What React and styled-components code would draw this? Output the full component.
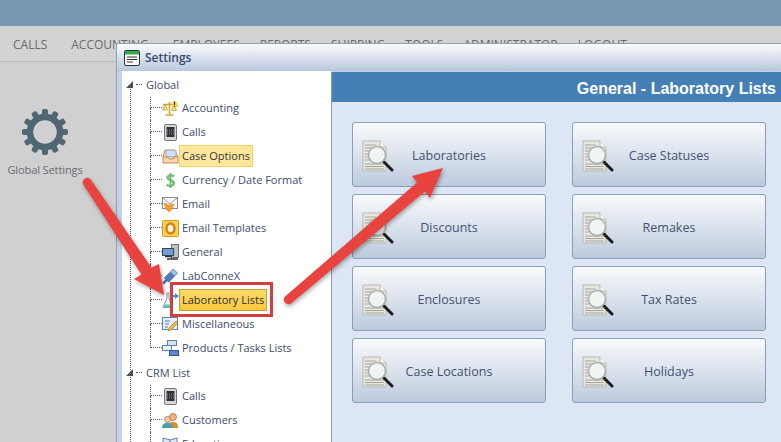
import styled, { createGlobalStyle } from 'styled-components';

const GlobalStyle = createGlobalStyle`
  html, body {
    margin: 0;
    padding: 0;
    background: #d0d0d0;
    font-family: "Open Sans", "Noto Sans", sans-serif;
  }
`;

const Page = styled.div`
  position: relative;
  width: 781px;
  height: 442px;
  overflow: hidden;
  background: #d0d0d0;
`;

const TopBar = styled.div`
  height: 26px;
  background: #7996b2;
`;

const Nav = styled.nav`
  display: flex;
  align-items: center;
  gap: 20px;
  height: 36px;
  padding: 1px 0 0 13px;
  background: #d3d3d3;
  border-bottom: 1px solid #bcbcbc;
  box-sizing: border-box;
`;

const NavItem = styled.span`
  font-size: 12px;
  color: #666b6e;

  &:nth-child(-n + 2) {
    margin-right: 4px;
  }
`;

const Side = styled.div`
  display: flex;
  flex-direction: column;
  align-items: center;
  width: 90px;
  padding-top: 47px;
`;

const SideLabel = styled.span`
  margin-top: 7px;
  font-size: 11px;
  letter-spacing: -0.1px;
  color: #666d71;
  white-space: nowrap;
`;

const Window = styled.div`
  position: absolute;
  left: 116px;
  top: 43px;
  right: -4px;
  bottom: -40px;
  display: flex;
  flex-direction: column;
  background: #c3d2e6;
  border: 1px solid #8f9fb8;
  border-right: none;
  border-radius: 3px 0 0 0;
`;

const TitleBar = styled.div`
  display: flex;
  align-items: center;
  gap: 5px;
  height: 27px;
  flex: none;
  padding-left: 7px;
  box-sizing: border-box;
  background: linear-gradient(#fafbfd, #b9c8dd);
`;

const TitleText = styled.span`
  font-size: 12px;
  font-weight: 600;
  color: #3a4a6b;
`;

const WindowBody = styled.div`
  flex: 1;
  display: flex;
  min-height: 0;
  padding-left: 5px;
`;

const Tree = styled.div`
  width: 209px;
  flex: none;
  box-sizing: border-box;
  padding-top: 1px;
  background: #fff;
`;

const RootRow = styled.div`
  position: relative;
  display: flex;
  align-items: center;
  height: 24px;
  padding-left: 24px;
  font-size: 11px;
  color: #3d4b6b;

  &::before {
    content: '';
    position: absolute;
    left: 14px;
    top: 12px;
    width: 6px;
    border-top: 1px dotted #555;
  }
`;

const RootMark = styled.svg`
  position: absolute;
  left: 4px;
  top: 7px;
`;

const Branch = styled.div`
  position: relative;
  padding-left: 28px;

  &::before {
    content: '';
    position: absolute;
    left: 8px;
    top: -12px;
    bottom: ${({ $open }) => ($open ? '-12px' : '0')};
    border-left: 1px dotted #555;
  }
`;

const ChildRow = styled.div`
  position: relative;
  display: flex;
  align-items: center;
  height: 24px;
  padding-left: 12px;
  font-size: 11px;
  color: #3d4b6b;

  &::before {
    content: '';
    position: absolute;
    left: 0;
    top: ${({ $first }) => ($first ? '1px' : '0')};
    height: ${({ $first }) => ($first ? '11px' : '12px')};
    width: 12px;
    border-left: 1px dotted #555;
    border-bottom: 1px dotted #555;
    box-sizing: border-box;
  }

  &::after {
    content: '';
    display: ${({ $last }) => ($last ? 'none' : 'block')};
    position: absolute;
    left: 0;
    top: 12px;
    bottom: 0;
    border-left: 1px dotted #555;
  }
`;

const IconBox = styled.span`
  display: flex;
  width: 17px;
  height: 17px;
  flex: none;
`;

const Label = styled.span`
  padding: 0 2px;
  height: 22px;
  line-height: 20px;
  box-sizing: border-box;
  border: 1px solid transparent;
  white-space: nowrap;
  ${({ $state }) =>
    $state === 'hover' &&
    'background: #fde79c; border-color: #f3d063; color: #35343a;'}
  ${({ $state }) =>
    $state === 'active' &&
    'background: linear-gradient(#fcd968, #f8c93f); border-color: #c9a12f; color: #2f2f38;'}
`;

const Content = styled.div`
  flex: 1;
  display: flex;
  flex-direction: column;
  background: #dce6f5;
  border-left: 1px solid #7fa0c4;
  margin-top: 1px;
`;

const ContentHead = styled.div`
  display: flex;
  align-items: center;
  justify-content: flex-end;
  height: 30px;
  flex: none;
  padding: 4px 9px 0 0;
  box-sizing: border-box;
  background: #4480b5;
  font-family: "Liberation Sans", Arial, sans-serif;
  font-size: 16px;
  font-weight: 700;
  color: #fff;
`;

const ButtonGrid = styled.div`
  display: grid;
  grid-template-columns: 194px 194px;
  grid-auto-rows: 65px;
  column-gap: 26px;
  row-gap: 7px;
  padding: 20px 0 0 20px;
`;

const ListButton = styled.div`
  display: grid;
  grid-template-columns: 1fr auto 1fr;
  align-items: center;
  padding: 2px 9px 0;
  box-sizing: border-box;
  border: 1px solid #8d9db8;
  border-radius: 3px;
  background: linear-gradient(#f8fafc, #bdcbde);
  font-size: 12.5px;
  color: #44526f;
`;

const Overlay = styled.svg`
  position: absolute;
  left: 0;
  top: 0;
  filter: drop-shadow(1px 2px 2px rgba(0, 0, 0, 0.35));
  pointer-events: none;
`;

const MarkBox = styled.div`
  position: absolute;
  left: 170px;
  top: 282px;
  width: 103px;
  height: 35px;
  box-sizing: border-box;
  border: 3px solid #d63d3e;
`;

const Gear = () => (
  <svg width="46" height="46" viewBox="0 0 46 46">
    {Array.from({ length: 12 }, (_, i) => (
      <rect key={i} x="20" y="0" width="6" height="8" rx="2" fill="#506773" transform={`rotate(${i * 30} 23 23)`} />
    ))}
    <circle cx="23" cy="23" r="15" fill="none" stroke="#506773" strokeWidth="6.5" />
  </svg>
);

const WindowIcon = () => (
  <svg width="16" height="16" viewBox="0 0 16 16">
    <rect x=".5" y=".5" width="15" height="15" rx="1.5" fill="#fff" stroke="#1d3a24" />
    <rect x="1" y="1" width="14" height="3.5" fill="#35a94a" />
    <path d="M3 7h10M3 9.5h10M3 12h6" stroke="#333" />
  </svg>
);

const ScaleIcon = () => (
  <svg width="17" height="17" viewBox="0 0 17 17">
    <path d="M7.5 2v12M1 4.500h13M3.500 15h8" stroke="#cfa52e" strokeWidth="1.600" fill="none" />
    <path d="M3 4.500 .5 10h5zM12 5 9.500 10.500h5z" fill="#f7e29a" stroke="#b68f25" strokeWidth=".7" />
    <path d="M11 1h3l2.500 6h-7z" fill="#f3cf3d" />
    <path d="M12.500 2v3M12.500 5.800v1" stroke="#222" />
  </svg>
);

const TabletIcon = () => (
  <svg width="17" height="17" viewBox="0 0 17 17">
    <rect x="2.500" y=".5" width="12" height="16" rx="1.500" fill="#d8d8d4" stroke="#777" />
    <rect x="4.500" y="3" width="8" height="10" fill="#2d2f33" />
    <path d="M5 6h7M5 8h7M5 10h7" stroke="#8a8d93" strokeDasharray="1 1" />
  </svg>
);

const TrayIcon = () => (
  <svg width="17" height="17" viewBox="0 0 17 17">
    <path d="M3 2h10l3 7v6H1V9z" fill="#f6d6b4" stroke="#c98a55" />
    <rect x="4" y="2.500" width="10" height="6" fill="#cfe2f2" stroke="#9db8cf" />
    <path d="M1 9h5l1 2h4l1-2h4" fill="none" stroke="#c98a55" />
  </svg>
);

const DollarIcon = () => (
  <svg width="17" height="17" viewBox="0 0 17 17">
    <path d="M12 4.500C11 3 6 2.700 5.500 5.500S12 8 11.800 11.200 6 14.500 4.800 12.500" fill="none" stroke="#6dbd70" strokeWidth="2.400" />
    <path d="M8.500 1v15" stroke="#6dbd70" strokeWidth="1.800" />
  </svg>
);

const MailIcon = () => (
  <svg width="17" height="17" viewBox="0 0 17 17">
    <rect x=".5" y="1.500" width="15" height="11" fill="#f7f7f7" stroke="#8b8b8b" />
    <path d="M1 2l7 6 7-6" fill="none" stroke="#9a9a9a" />
    <path d="M2 7l5 2 5-1-2 5-3 3-3-3z" fill="#f0a02a" stroke="#c97a12" strokeWidth=".5" />
  </svg>
);

const OutlookIcon = () => (
  <svg width="17" height="17" viewBox="0 0 17 17">
    <rect x=".5" y=".5" width="16" height="16" rx="1" fill="#fbd15a" stroke="#d59a1d" />
    <ellipse cx="8.500" cy="8.500" rx="4" ry="5" fill="#fff6d8" stroke="#e07b12" strokeWidth="2.400" />
  </svg>
);

const GeneralIcon = () => (
  <svg width="17" height="17" viewBox="0 0 17 17">
    <rect x="9.500" y=".5" width="7" height="13" fill="#b9c0c8" stroke="#68707a" />
    <rect x=".5" y="4.500" width="11" height="7" fill="#6f9bd6" stroke="#39465c" />
    <path d="M3 12.500h7M5 15h11" stroke="#333" strokeWidth="1.500" />
  </svg>
);

const PlugIcon = () => (
  <svg width="18" height="17" viewBox="0 0 18 17">
    <path d="M1 16l4-4" stroke="#456ea8" strokeWidth="2.500" />
    <path d="M2.500 10l6-6 4.500 4.500-6 6z" fill="#4f7dc0" stroke="#34558c" strokeWidth=".7" />
    <path d="M9 3.500l3-3 4.500 4.500-3 3z" fill="#a5c3ea" stroke="#34558c" strokeWidth=".7" />
  </svg>
);

const FlaskIcon = () => (
  <svg width="17" height="17" viewBox="0 0 17 17">
    <path d="M5 1v5L1 15.500h9L7 6V1z" fill="#eef7f5" stroke="#8a9aa0" />
    <path d="M2.500 12.500h6l1 3h-8z" fill="#63c6b5" />
    <path d="M8 3h5V1l4 3-4 3V5H8z" fill="#3d8fd8" />
  </svg>
);

const MiscIcon = () => (
  <svg width="17" height="17" viewBox="0 0 17 17">
    <rect x=".5" y="1.500" width="15" height="12" fill="#e5eef8" stroke="#5f83b5" />
    <path d="M3 5h5M3 8h4M3 11h3" stroke="#5f83b5" />
    <path d="M6 15l1-3 7-7 2 2-7 7z" fill="#f0b93e" stroke="#a87a1a" strokeWidth=".6" />
  </svg>
);

const ListIcon = () => (
  <svg width="17" height="17" viewBox="0 0 17 17">
    <rect x="5.500" y=".5" width="9" height="5" fill="#d6e2f1" stroke="#5b7fb2" />
    <rect x=".5" y="5.500" width="9" height="5" fill="#eef3fa" stroke="#5b7fb2" />
    <rect x="7.500" y="10.500" width="9" height="5" fill="#5b8ac8" stroke="#34558c" />
  </svg>
);

const PeopleIcon = () => (
  <svg width="17" height="17" viewBox="0 0 17 17">
    <circle cx="11" cy="5" r="3.500" fill="#f2b483" stroke="#a85f28" strokeWidth=".7" />
    <path d="M7 16c0-5 1-6 4-6s5 1 5 6z" fill="#e08a33" />
    <circle cx="5.500" cy="7.500" r="3" fill="#f5cda7" stroke="#8d6b45" strokeWidth=".7" />
    <path d="M0 16c0-4 2-5 5.500-5S11 12 11 16z" fill="#4aa0a8" />
  </svg>
);

const BooksIcon = () => (
  <svg width="17" height="17" viewBox="0 0 17 17">
    <path d="M1 2l7 2 7-2v12l-7 2-7-2z" fill="#dfe8f4" stroke="#5b7fb2" />
    <path d="M8 4v12" stroke="#5b7fb2" />
  </svg>
);

const SearchDoc = () => (
  <svg width="32" height="32" viewBox="0 0 32 32">
    <path d="M1 1h17l6 6v24H1z" fill="#e7e6df" stroke="#b9b8ae" />
    <path d="M18 1v6h6" fill="#f7f7f3" stroke="#b9b8ae" />
    <path d="M3 5h11M3 8h12M3 11h4M3 14h3M3 17h3M3 20h4M3 24h19M3 26.500h19M3 29h19" stroke="#a9a89e" />
    <path d="M22 22l8 8" stroke="#1c1c1c" strokeWidth="3" strokeLinecap="round" />
    <circle cx="15" cy="15" r="8.500" fill="#f2f4f4" fillOpacity=".85" stroke="#a8aeb0" strokeWidth="1.500" />
  </svg>
);

const globalItems = [
  { name: 'Accounting', icon: <ScaleIcon /> },
  { name: 'Calls', icon: <TabletIcon /> },
  { name: 'Case Options', icon: <TrayIcon />, state: 'hover' },
  { name: 'Currency / Date Format', icon: <DollarIcon /> },
  { name: 'Email', icon: <MailIcon /> },
  { name: 'Email Templates', icon: <OutlookIcon /> },
  { name: 'General', icon: <GeneralIcon /> },
  { name: 'LabConneX', icon: <PlugIcon /> },
  { name: 'Laboratory Lists', icon: <FlaskIcon />, state: 'active' },
  { name: 'Miscellaneous', icon: <MiscIcon /> },
  { name: 'Products / Tasks Lists', icon: <ListIcon /> },
];

const crmItems = [
  { name: 'Calls', icon: <TabletIcon /> },
  { name: 'Customers', icon: <PeopleIcon /> },
  { name: 'Education', icon: <BooksIcon /> },
];

const lists = [
  'Laboratories',
  'Case Statuses',
  'Discounts',
  'Remakes',
  'Enclosures',
  'Tax Rates',
  'Case Locations',
  'Holidays',
];

const navItems = ['CALLS', 'ACCOUNTING', 'EMPLOYEES', 'REPORTS', 'SHIPPING', 'TOOLS', 'ADMINISTRATOR', 'LOGOUT'];

const TreeBranch = ({ title, items, open }) => (
  <>
    <RootRow>
      <RootMark width="8" height="10" viewBox="0 0 8 10">
        <path d="M0 9 7 2v7z" fill="#4a4f5c" />
      </RootMark>
      {title}
    </RootRow>
    <Branch $open={open}>
      {items.map((item, i) => (
        <ChildRow key={item.name} $first={i === 0} $last={i === items.length - 1}>
          <IconBox>{item.icon}</IconBox>
          <Label $state={item.state}>{item.name}</Label>
        </ChildRow>
      ))}
    </Branch>
  </>
);

export default function App() {
  return (
    <Page>
      <GlobalStyle />
      <TopBar />
      <Nav>
        {navItems.map((item) => (
          <NavItem key={item}>{item}</NavItem>
        ))}
      </Nav>
      <Side>
        <Gear />
        <SideLabel>Global Settings</SideLabel>
      </Side>

      <Window>
        <TitleBar>
          <WindowIcon />
          <TitleText>Settings</TitleText>
        </TitleBar>
        <WindowBody>
          <Tree>
            <TreeBranch title="Global" items={globalItems} open />
            <TreeBranch title="CRM List" items={crmItems} />
          </Tree>
          <Content>
            <ContentHead>General - Laboratory Lists</ContentHead>
            <ButtonGrid>
              {lists.map((name) => (
                <ListButton key={name}>
                  <SearchDoc />
                  <span>{name}</span>
                </ListButton>
              ))}
            </ButtonGrid>
          </Content>
        </WindowBody>
      </Window>

      <MarkBox />
      <Overlay width="781" height="442" viewBox="0 0 781 442">
        <path
          d="M90.700 179.500 151.500 267.600 159 264 164 295 134 279 141.500 274.400 83.300 184.500A4.500 4.500 0 0 1 90.700 179.500Z"
          fill="#e8433f"
        />
        <path
          d="M285.100 296.600 417.100 182.400 412 176 443 168 430 198 424.900 191.600 290.900 303.400A4.500 4.500 0 0 1 285.100 296.600Z"
          fill="#e8433f"
        />
      </Overlay>
    </Page>
  );
}
